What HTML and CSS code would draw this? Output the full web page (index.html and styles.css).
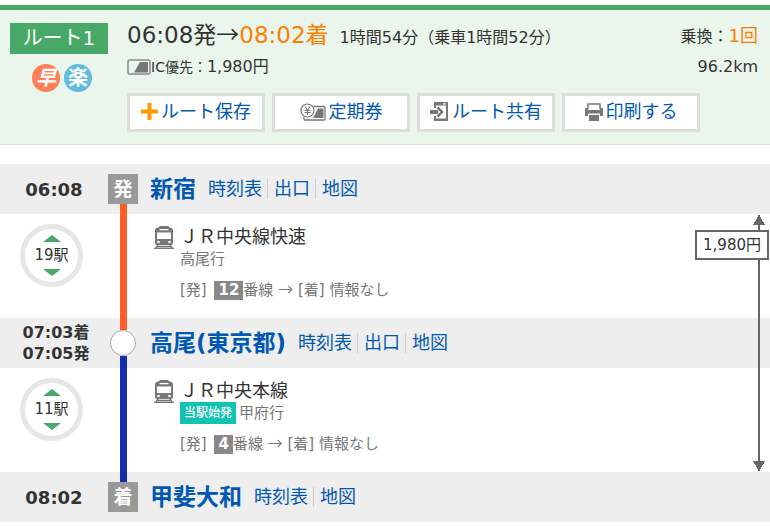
FILE: index.html
```html
<!DOCTYPE html>
<html lang="ja">
<head>
  <meta charset="UTF-8">
  <meta name="viewport" content="width=device-width, initial-scale=1.0">
  <title>ルート1</title>
  <link rel="stylesheet" href="styles.css">
</head>
<body>
  <header class="summary">
    <div class="summary-side">
      <h1 class="route-no">ルート1</h1>
      <div class="marks">
        <span class="mark mark-fast">早</span>
        <span class="mark mark-easy">楽</span>
      </div>
    </div>
    <div class="summary-main">
      <div class="summary-row">
        <p class="times">06:08発<span class="arrow">→</span><span class="accent">08:02着</span><span class="duration">1時間54分（乗車1時間52分）</span></p>
        <p class="transfer">乗換：<span class="accent">1回</span></p>
      </div>
      <div class="summary-row">
        <p class="fare">
          <svg width="24" height="16" viewBox="0 0 24 16"><rect x="1" y="1" width="22" height="14" rx="1.5" fill="none" stroke="#888" stroke-width="1.5"/><path d="M7 13.500 13 3h8v10.500z" fill="#777"/></svg>
          <span>IC優先：</span><span class="price">1,980円</span>
        </p>
        <p class="distance">96.2km</p>
      </div>
      <div class="actions">
        <button type="button">
          <svg width="17" height="17" viewBox="0 0 17 17"><path d="M6.5 0h4v6.500H17v4h-6.500V17h-4v-6.500H0v-4h6.500z" fill="#ff9900"/></svg>
          <span>ルート保存</span>
        </button>
        <button type="button">
          <svg width="26" height="18" viewBox="0 0 26 18"><rect x="4" y="3.500" width="21" height="13.500" rx="1" fill="#fff" stroke="#777" stroke-width="1.300"/><path d="M13 15 18 5.500h5.500V15z" fill="#777"/><circle cx="7.500" cy="7.500" r="7.500" fill="#fff"/><circle cx="7.500" cy="7.500" r="6.500" fill="#fff" stroke="#777" stroke-width="1.200"/><path d="M4.800 3.500 7.500 7l2.700-3.500M4.500 7.500h6M4.500 9.500h6M7.500 7v5" fill="none" stroke="#777" stroke-width="1.200"/></svg>
          <span>定期券</span>
        </button>
        <button type="button">
          <svg width="19" height="20" viewBox="0 0 19 20"><path d="M4 0h14v19H4v-5h2v2.500h10V3.500H6V6H4z" fill="#777"/><path d="M13 1.200h2.500v1.300H13z" fill="#fff"/><path d="M0 9h8M0 11h8" stroke="#777" stroke-width="2"/><path d="M7.500 5.500 12 10l-4.500 4.500" fill="none" stroke="#777" stroke-width="2.500"/></svg>
          <span>ルート共有</span>
        </button>
        <button type="button">
          <svg width="18" height="18" viewBox="0 0 18 18"><path d="M3 6V1h12v5" fill="#fff" stroke="#777" stroke-width="1.500"/><path d="M1 5h2v2h12V5h2q1 0 1 1v7h-3v-2.500H3V13H0V6q0-1 1-1z" fill="#777"/><path d="M4 12h10v6H4z" fill="#777"/></svg>
          <span>印刷する</span>
        </button>
      </div>
    </div>
  </header>

  <main class="route">
    <section class="station">
      <p class="time">06:08</p>
      <div class="rail">
        <span class="gap"></span>
        <span class="point">発</span>
        <span class="track orange"></span>
      </div>
      <div class="station-info">
        <h2><a href="#">新宿</a></h2>
        <ul class="links">
          <li><a href="#">時刻表</a></li>
          <li><a href="#">出口</a></li>
          <li><a href="#">地図</a></li>
        </ul>
      </div>
    </section>

    <div class="fare-section">
      <section class="ride">
        <div class="stops">
          <button type="button" class="stops-btn">19駅</button>
        </div>
        <div class="rail"><span class="track orange"></span></div>
        <div class="ride-info">
          <svg class="train" width="20" height="23" viewBox="0 0 20 23"><path d="M5.500 0h9v1l3 1q1.500.500 1.500 2.500V17q0 2-2 2H3q-2 0-2-2V4.500Q1 2.500 2.500 2l3-1z" fill="#777"/><path d="M5.500 3h9v1.300h-9zM3 6.500h14V13H3z" fill="#fff"/><circle cx="4.500" cy="16" r="1.300" fill="#fff"/><circle cx="15.500" cy="16" r="1.300" fill="#fff"/><path d="M4 19 1.500 22.500M16 19l2.500 3.500M3 20.500h14M0 22.300h20" stroke="#777" stroke-width="1.300"/></svg>
          <div class="ride-text">
            <h3>ＪＲ中央線快速</h3>
            <p class="bound">高尾行</p>
            <p class="platform">[発] <b>12</b>番線 <span class="arrow">→</span> [着] 情報なし</p>
          </div>
        </div>
      </section>

      <section class="station">
        <p class="time time-double">07:03着<br>07:05発</p>
        <div class="rail">
          <span class="track orange"></span>
          <span class="change"></span>
          <span class="track blue"></span>
        </div>
        <div class="station-info">
          <h2><a href="#">高尾(東京都)</a></h2>
          <ul class="links">
            <li><a href="#">時刻表</a></li>
            <li><a href="#">出口</a></li>
            <li><a href="#">地図</a></li>
          </ul>
        </div>
      </section>

      <section class="ride">
        <div class="stops">
          <button type="button" class="stops-btn">11駅</button>
        </div>
        <div class="rail"><span class="track blue"></span></div>
        <div class="ride-info">
          <svg class="train" width="20" height="23" viewBox="0 0 20 23"><path d="M5.500 0h9v1l3 1q1.500.500 1.500 2.500V17q0 2-2 2H3q-2 0-2-2V4.500Q1 2.500 2.500 2l3-1z" fill="#777"/><path d="M5.500 3h9v1.300h-9zM3 6.500h14V13H3z" fill="#fff"/><circle cx="4.500" cy="16" r="1.300" fill="#fff"/><circle cx="15.500" cy="16" r="1.300" fill="#fff"/><path d="M4 19 1.500 22.500M16 19l2.500 3.500M3 20.500h14M0 22.300h20" stroke="#777" stroke-width="1.300"/></svg>
          <div class="ride-text">
            <h3>ＪＲ中央本線</h3>
            <p class="bound"><span class="first">当駅始発</span>甲府行</p>
            <p class="platform">[発] <b>4</b>番線 <span class="arrow">→</span> [着] 情報なし</p>
          </div>
        </div>
      </section>

      <!-- fare range, drawn over the rows it covers -->
      <div class="fare-range">
        <span class="fare-label">1,980円</span>
      </div>
    </div>

    <section class="station">
      <p class="time">08:02</p>
      <div class="rail">
        <span class="track blue"></span>
        <span class="point">着</span>
        <span class="gap"></span>
      </div>
      <div class="station-info">
        <h2><a href="#">甲斐大和</a></h2>
        <ul class="links">
          <li><a href="#">時刻表</a></li>
          <li><a href="#">地図</a></li>
        </ul>
      </div>
    </section>
  </main>
</body>
</html>
```
FILE: styles.css
```css
* {
  box-sizing: border-box;
}

body {
  margin: 0;
  padding-top: 5px;
  background: #fff;
  color: #333;
  font-family: "DejaVu Sans", "Noto Sans CJK JP", sans-serif;
  font-size: 16px;
}

h1, h2, h3, p, ul {
  margin: 0;
  padding: 0;
  font-weight: normal;
}

a {
  color: #0058b3;
  text-decoration: none;
}

button {
  font-family: inherit;
  cursor: pointer;
}

svg {
  flex: none;
}

.arrow {
  font-family: "Noto Sans CJK JP", sans-serif;
  line-height: 1;
}

.accent {
  color: #ff7e00;
}

/* summary */
.summary {
  display: flex;
  gap: 19px;
  padding: 12px 12px 12px 10px;
  background: #eaf5eb;
  border-top: 5px solid #48a868;
  border-bottom: 1px solid #ddd;
}

.summary-side {
  width: 98px;
  padding-top: 1px;
}

.route-no {
  background: #48a868;
  color: #fff;
  font-size: 20px;
  line-height: 31px;
  text-align: center;
}

.marks {
  display: flex;
  justify-content: center;
  gap: 4px;
  margin-top: 10px;
  padding-left: 6px;
}

.mark {
  width: 28px;
  height: 28px;
  border-radius: 50%;
  color: #fff;
  font-size: 20px;
  font-weight: bold;
  line-height: 28px;
  text-align: center;
}

.mark-fast {
  background: #ff7f56;
  font-style: italic;
}

.mark-easy {
  background: #60bbdc;
}

.summary-main {
  flex: 1;
}

.summary-row {
  display: flex;
  justify-content: space-between;
}

.times {
  font-size: 23px;
  line-height: 27px;
}

.duration {
  margin-left: 11px;
  font-size: 16px;
  line-height: 1;
}

.transfer {
  line-height: 29px;
}

.transfer .accent {
  font-size: 18px;
  line-height: 1;
}

.fare {
  display: flex;
  align-items: center;
  font-size: 14px;
  line-height: 32px;
}

.price {
  font-size: 16px;
}

.distance {
  line-height: 32px;
}

.actions {
  display: flex;
  gap: 7px;
  margin-top: 10px;
}

.actions button {
  display: flex;
  align-items: center;
  justify-content: center;
  gap: 3px;
  width: 138px;
  height: 39px;
  padding: 0 0 2px;
  background: #fff;
  border: 3px solid #ddd;
  color: #0058b3;
  font-size: 18px;
  line-height: 27px;
}

/* route */
.route {
  margin-top: 19px;
}

.station,
.ride {
  display: grid;
  grid-template-columns: 108px 30px 1fr;
}

.station {
  min-height: 50px;
  background: #eee;
}

.ride {
  min-height: 104px;
}

.time {
  align-self: center;
  font-size: 18px;
  font-weight: bold;
  text-align: center;
}

.time-double {
  padding-left: 4px;
  font-size: 16px;
  line-height: 21px;
}

.rail {
  display: flex;
  flex-direction: column;
  align-items: center;
}

.gap,
.track {
  flex: 1;
  width: 7px;
}

.orange {
  background: #ff5f26;
}

.blue {
  background: #182cb0;
}

.point {
  width: 30px;
  height: 30px;
  background: #999;
  color: #fff;
  font-size: 19px;
  font-weight: bold;
  line-height: 30px;
  text-align: center;
}

.change {
  width: 26px;
  height: 26px;
  background: #fff;
  border: 1px solid #aaa;
  border-radius: 50%;
}

.station-info {
  display: flex;
  align-items: center;
  gap: 12px;
  padding-left: 12px;
}

.station-info h2 {
  font-size: 23px;
  font-weight: bold;
  line-height: 48px;
}

.station-info h2 a {
  display: block;
}

.links {
  display: flex;
  list-style: none;
  font-size: 18px;
  line-height: 20px;
}

.links li + li {
  margin-left: 5px;
  padding-left: 6px;
  border-left: 1px solid #ccc;
}

.stops {
  padding: 10px 0 0 20px;
}

.stops-btn {
  display: flex;
  flex-direction: column;
  align-items: center;
  justify-content: center;
  gap: 3px;
  width: 63px;
  height: 63px;
  padding: 0;
  background: #fff;
  border: 5px solid #e6e6e6;
  border-radius: 50%;
  color: #333;
  font-size: 15px;
  line-height: 21px;
}

.stops-btn::before,
.stops-btn::after {
  content: "";
  border: solid transparent;
  border-width: 0 9px;
}

.stops-btn::before {
  border-bottom: 7px solid #48a868;
}

.stops-btn::after {
  border-top: 7px solid #48a868;
}

.ride-info {
  display: flex;
  gap: 6px;
  padding: 12px 0 0 16px;
}

.ride-text {
  color: #777;
  font-size: 15px;
  line-height: 22px;
}

.ride-text h3 {
  color: #333;
  font-size: 18px;
  line-height: 22px;
}

.first {
  display: inline-block;
  margin-right: 3px;
  padding: 0 4px;
  background: #10c4b2;
  color: #fff;
  font-size: 12px;
  font-weight: 500;
  vertical-align: top;
}

.platform {
  margin-top: 9px;
}

.platform b {
  display: inline-block;
  margin-left: 3px;
  padding: 0 4px;
  background: #888;
  color: #fff;
  line-height: 19px;
}

.fare-section {
  position: relative;
}

.fare-range {
  position: absolute;
  top: 0;
  right: 1px;
  bottom: 0;
  padding-top: 16px;
}

.fare-range::before {
  content: "";
  position: absolute;
  top: 8px;
  right: 9px;
  bottom: 8px;
  width: 2px;
  background: #666;
}

.fare-range::after {
  content: "";
  position: absolute;
  top: 0;
  right: 4px;
  bottom: 0;
  width: 12px;
  background:
    conic-gradient(from 152deg at 50% 0, #666 56deg, transparent 0) top / 12px 11px no-repeat,
    conic-gradient(from 332deg at 50% 100%, #666 56deg, transparent 0) bottom / 12px 11px no-repeat;
}

.fare-label {
  display: block;
  position: relative;
  z-index: 1;
  padding: 0 6px;
  background: #fff;
  border: 2px solid #666;
  font-size: 15px;
  line-height: 26px;
}
```
